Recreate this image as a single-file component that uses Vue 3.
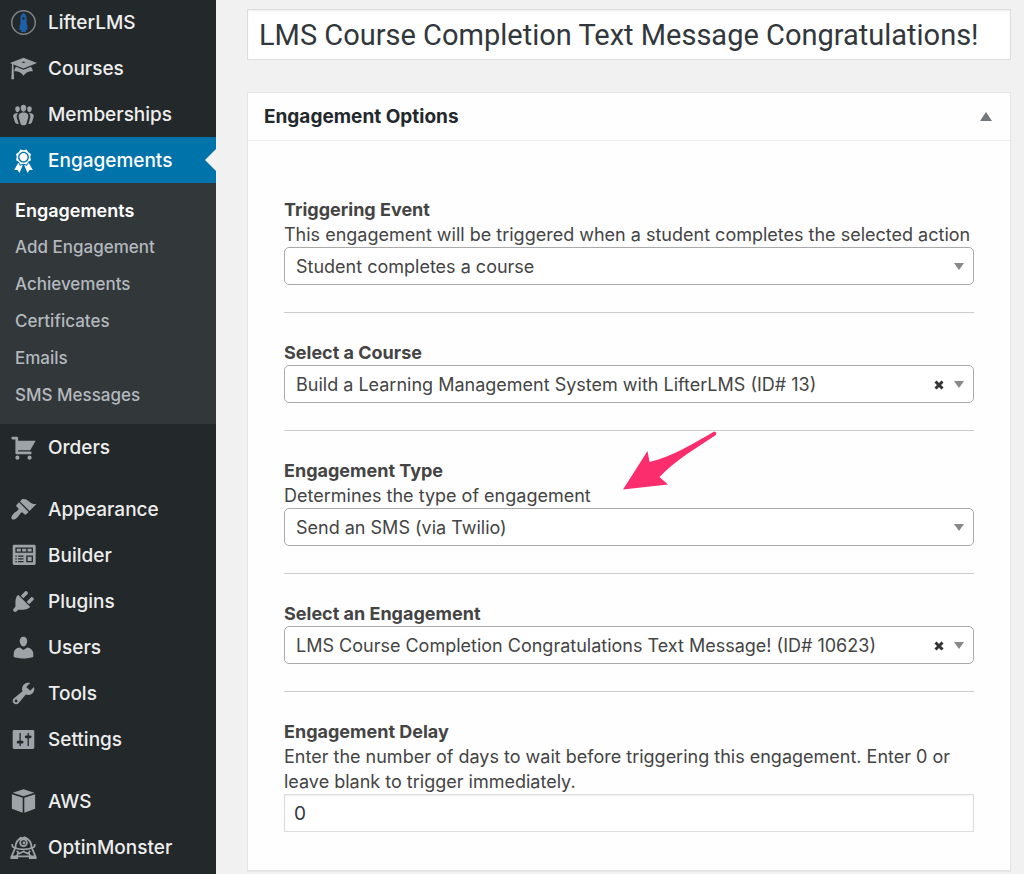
<script setup>
import { ref } from "vue";

const menu = [
  { id: "lifter", label: "LifterLMS" },
  {
    id: "courses",
    label: "Courses",
    path: "M10 10L2.54 7.02 3 18H1l.48-11.41L0 6l10-4 10 4zm0-5c-.55 0-1 .22-1 .5s.45.5 1 .5 1-.22 1-.5-.45-.5-1-.5zm0 6l5.57-2.23c.71.94 1.2 2.07 1.36 3.3-.3-.04-.61-.07-.93-.07-2.55 0-4.78 1.37-6 3.41C8.78 13.37 6.55 12 4 12c-.32 0-.63.03-.93.07.16-1.23.65-2.36 1.36-3.3z",
  },
  {
    id: "memberships",
    label: "Memberships",
    path: "M8.03 4.46c-.29 1.28.55 3.46 1.97 3.46 1.41 0 2.25-2.18 1.96-3.46-.22-.98-1.08-1.63-1.96-1.63-.89 0-1.74.65-1.97 1.63zM3.9 5.36c-.25 1.08.47 2.93 1.67 2.93s1.92-1.85 1.67-2.93c-.19-.83-.92-1.39-1.67-1.39s-1.48.56-1.67 1.39zm8.86 0c-.25 1.08.47 2.93 1.66 2.93 1.2 0 1.92-1.85 1.67-2.93-.19-.83-.92-1.39-1.67-1.39-.74 0-1.47.56-1.66 1.39zm-.59 11.43l1.25-4.3C14.2 10 12.71 8.47 10 8.47c-2.72 0-4.21 1.53-3.44 4.02l1.26 4.3C8.05 17.51 9 18 10 18c.98 0 1.94-.49 2.17-1.21zM6.1 9.1c-1.3 1.1-1.4 2.3-.9 3.9l1.2 4c-1.5 0-2.4-.5-2.7-1.3l-1.1-3.4C1.9 10 3.3 8.7 6.1 9.1zM13.9 9.1c1.3 1.1 1.4 2.3.9 3.9l-1.2 4c1.5 0 2.4-.5 2.7-1.3l1.1-3.4C18.1 10 16.7 8.7 13.9 9.1z",
  },
  {
    id: "engagements",
    label: "Engagements",
    path: "M4.46 5.16L5 7.46l-.54 2.29 2.01 1.24L7.7 13l2.3-.54 2.3.54 1.23-2.01 2.01-1.24L15 7.46l.54-2.3-2-1.24-1.24-2.01-2.3.55-2.29-.54-1.25 2zm5.55 6.34c-2.21 0-4-1.79-4-4s1.79-4 4-4 4 1.79 4 4-1.79 4-4 4zm-.02-1C8.33 10.5 7 9.16 7 7.5c0-1.65 1.33-3 2.99-3S13 5.85 13 7.5c0 1.66-1.35 3-3.01 3zm3.84 1.1l-1.28 2.24-2.08-.47L13 19.2l1.4-2.2h2.5zm-7.7.07l1.25 2.25 2.13-.51L7 19.2 5.6 17H3.1z",
    current: true,
    children: [
      "Engagements",
      "Add Engagement",
      "Achievements",
      "Certificates",
      "Emails",
      "SMS Messages",
    ],
  },
  {
    id: "orders",
    label: "Orders",
    path: "M6 13h9c.55 0 1 .45 1 1s-.45 1-1 1H5c-.55 0-1-.45-1-1V4H2c-.55 0-1-.45-1-1s.45-1 1-1h3c.55 0 1 .45 1 1v2h13l-4 7H6v1zm-.5 3c.83 0 1.5.67 1.5 1.5S6.33 19 5.5 19 4 18.33 4 17.5 4.67 16 5.5 16zm9 0c.83 0 1.5.67 1.5 1.5s-.67 1.5-1.5 1.5-1.5-.67-1.5-1.5.67-1.5 1.5-1.5z",
  },
  {
    id: "appearance",
    label: "Appearance",
    separated: true,
    path: "M14.48 11.06L7.41 3.99l1.5-1.5c.5-.56 2.3-.47 3.51.32 1.21.8 1.43 1.28 2.91 2.1 1.18.64 2.45 1.26 4.45.85zm-.71.71L6.7 4.7 4.93 6.47c-.39.39-.39 1.02 0 1.41l1.06 1.06c.39.39.39 1.03 0 1.42-.6.6-1.43 1.11-2.21 1.69-.35.26-.7.53-1.01.84C1.43 14.23.4 16.08 1.4 17.07c.99 1 2.84-.03 4.18-1.36.31-.31.58-.66.85-1.02.57-.78 1.08-1.61 1.69-2.21.39-.39 1.02-.39 1.41 0l1.06 1.06c.39.39 1.02.39 1.41 0z",
  },
  {
    id: "builder",
    label: "Builder",
    path: "M19 16V3c0-.55-.45-1-1-1H3c-.55 0-1 .45-1 1v13c0 .55.45 1 1 1h15c.55 0 1-.45 1-1zM4 4h13v4H4V4zm1 1v2h3V5H5zm4 0v2h3V5H9zm4 0v2h3V5h-3zM4 10h1v1H4zM6 10h4v1H6zM4 12h1v1H4zM6 12h4v1H6zM4 14h1v1H4zM6 14h4v1H6zM12 10h5v5h-5zm1 1v3h3v-3z",
  },
  {
    id: "plugins",
    label: "Plugins",
    path: "M13.11 4.36L9.87 7.6 8 5.73l3.24-3.24c.35-.34 1.05-.2 1.56.32.52.51.66 1.21.31 1.55zm-8 1.77l.91-1.12 9.01 9.01-1.19.84c-.71.71-2.63 1.16-3.82 1.16H6.14L4.9 17.26c-.59.59-1.54.59-2.12 0-.59-.58-.59-1.53 0-2.12l1.24-1.24v-3.88c0-1.13.4-3.19 1.09-3.89zm7.26 3.97l3.24-3.24c.34-.35 1.04-.21 1.55.31.52.51.66 1.21.31 1.55l-3.24 3.25z",
  },
  {
    id: "users",
    label: "Users",
    path: "M10 9.25c-2.27 0-2.73-3.44-2.73-3.44C7 4.02 7.82 2 9.97 2c2.16 0 2.98 2.02 2.71 3.81 0 0-.41 3.44-2.68 3.44zm0 2.57L12.72 10c2.39 0 4.52 2.33 4.52 4.53v2.49s-3.65 1.13-7.24 1.13c-3.65 0-7.24-1.13-7.24-1.13v-2.49c0-2.25 1.94-4.48 4.47-4.48z",
  },
  {
    id: "tools",
    label: "Tools",
    path: "M16.68 9.77c-1.34 1.34-3.3 1.67-4.95.99l-5.41 6.52c-.99.99-2.59.99-3.58 0s-.99-2.59 0-3.57l6.52-5.42c-.68-1.65-.35-3.61.99-4.95 1.28-1.28 3.12-1.62 4.72-1.06l-2.89 2.89 2.82 2.82 2.86-2.87c.53 1.58.18 3.39-1.08 4.65zM3.81 16.21c.4.39 1.04.39 1.43 0 .4-.4.4-1.04 0-1.43-.39-.4-1.03-.4-1.43 0-.39.39-.39 1.03 0 1.43z",
  },
  {
    id: "settings",
    label: "Settings",
    path: "M18 16V4c0-.55-.45-1-1-1H3c-.55 0-1 .45-1 1v12c0 .55.45 1 1 1h14c.55 0 1-.45 1-1zM8 11h1c.55 0 1 .45 1 1s-.45 1-1 1H8v1.5c0 .28-.22.5-.5.5s-.5-.22-.5-.5V13H6c-.55 0-1-.45-1-1s.45-1 1-1h1V5.5c0-.28.22-.5.5-.5s.5.22.5.5V11zm5-2h-1c-.55 0-1-.45-1-1s.45-1 1-1h1V5.5c0-.28.22-.5.5-.5s.5.22.5.5V7h1c.55 0 1 .45 1 1s-.45 1-1 1h-1v5.5c0 .28-.22.5-.5.5s-.5-.22-.5-.5V9z",
  },
  {
    id: "aws",
    label: "AWS",
    separated: true,
    path: "M10 1L18 3.6 10 6.2 2 3.6zM1.4 4.7L9.4 7.3V18.4L1.4 15.4zM18.6 4.7L10.6 7.3V18.4L18.6 15.4z",
  },
  { id: "optin", label: "OptinMonster" },
];

const title = ref("LMS Course Completion Text Message Congratulations!");
const delay = ref("0");

const fields = [
  {
    id: "trigger",
    label: "Triggering Event",
    desc: "This engagement will be triggered when a student completes the selected action",
    value: "Student completes a course",
  },
  {
    id: "course",
    label: "Select a Course",
    value: "Build a Learning Management System with LifterLMS (ID# 13)",
    clearable: true,
  },
  {
    id: "type",
    label: "Engagement Type",
    desc: "Determines the type of engagement",
    value: "Send an SMS (via Twilio)",
    pointer: true,
  },
  {
    id: "engagement",
    label: "Select an Engagement",
    value: "LMS Course Completion Congratulations Text Message! (ID# 10623)",
    clearable: true,
  },
];
</script>

<template>
  <div class="admin">
    <nav class="sidebar">
      <ul class="menu">
        <li v-for="item in menu" :key="item.id" :class="{ separated: item.separated }">
          <a href="#" :class="['menu-link', { current: item.current }]">
            <svg v-if="item.id === 'lifter'" class="icon" viewBox="0 0 20 20" aria-hidden="true">
              <circle cx="10" cy="10" r="8.7" fill="none" stroke="#7f8487" stroke-width="1.1" />
              <path
                fill="#1d5fa8"
                d="M10 3c1.7.8 2.3 2.2 2.3 4v4.2l.6.8v3.6h-1.200V17H8.300v-1.400H7.100V12l.6-.8V7c0-1.800.6-3.200 2.300-4z"
              />
              <circle cx="10" cy="7" r=".9" fill="#23282b" />
            </svg>
            <svg v-else-if="item.id === 'optin'" class="icon" viewBox="0 0 20 20" aria-hidden="true">
              <g fill="none" stroke="currentColor" stroke-width="1.3" stroke-linejoin="round">
                <path d="M4 11C4 5.5 6.5 3 10 3S16 5.5 16 11" />
                <circle cx="10" cy="6.5" r="2.5" />
                <path d="M3.5 10.2c3.5 1.6 9.5 1.6 13 0M5 12.5l2 2 3-1.5 3 1.5 2-2M4 16.5h12" />
                <path d="M3.8 10.5L1 17h4l1-3M16.2 10.5L19 17h-4l-1-3M1.5 7.5l.5 2 2 1M18.5 7.5l-.5 2-2 1" />
              </g>
              <path fill="currentColor" d="M5.5 5l2-3 2 .6 1-1 2 1L14.5 5l-2-.8h-5zM.8 16H6v2.5H.2zM14 16h5.2l.6 2.5H14z" />
              <circle cx="10.3" cy="6.6" r="1" fill="currentColor" />
            </svg>
            <svg v-else class="icon" viewBox="0 0 20 20" aria-hidden="true">
              <path fill="currentColor" fill-rule="evenodd" :d="item.path" />
            </svg>
            <span>{{ item.label }}</span>
          </a>
          <ul v-if="item.children" class="submenu">
            <li v-for="(child, i) in item.children" :key="child">
              <a href="#" :class="['submenu-link', { active: i === 0 }]">{{ child }}</a>
            </li>
          </ul>
        </li>
      </ul>
    </nav>

    <main class="content">
      <input v-model="title" class="title-input" type="text" aria-label="Title" />

      <section class="panel">
        <header class="panel-header">
          <h2>Engagement Options</h2>
          <button class="toggle" type="button" aria-label="Toggle panel">
            <svg viewBox="0 0 12 9" aria-hidden="true"><path d="M6 0l6 9H0z" /></svg>
          </button>
        </header>

        <form class="panel-body" @submit.prevent>
          <div v-for="field in fields" :key="field.id" class="field">
            <label :for="field.id">{{ field.label }}</label>
            <p v-if="field.desc">{{ field.desc }}</p>
            <div class="select-wrap">
              <select :id="field.id">
                <option>{{ field.value }}</option>
              </select>
              <button v-if="field.clearable" class="clear" type="button" aria-label="Clear">
                <svg viewBox="0 0 10 10" aria-hidden="true"><path d="M1.5 1.5l7 7M8.5 1.5l-7 7" /></svg>
              </button>
              <svg class="caret" viewBox="0 0 10 7" aria-hidden="true"><path d="M0 0h10L5 7z" /></svg>
            </div>
            <svg v-if="field.pointer" class="pointer" viewBox="0 0 100 64" aria-hidden="true">
              <path
                d="M3 60.5L27.5 22l2 11C54 27 72 15 93 3.2c2.5-1.2 4.5 1 2.5 3C78 18 54 32 39.5 48l8.5 7.5z"
              />
            </svg>
          </div>

          <div class="field">
            <label for="delay">Engagement Delay</label>
            <p>
              Enter the number of days to wait before triggering this engagement. Enter 0 or leave
              blank to trigger immediately.
            </p>
            <input id="delay" v-model="delay" class="text-input" type="text" />
          </div>
        </form>
      </section>
    </main>
  </div>
</template>

<style>
body {
  background-color: #f1f1f1;
  overflow: hidden;
}
</style>

<style scoped>
.admin {
  display: flex;
  min-height: 100vh;
  font-family: Inter, "Liberation Sans", sans-serif;
  font-size: 18px;
  color: #444;
}
.admin * {
  box-sizing: border-box;
}

ul {
  list-style: none;
  margin: 0;
  padding: 0;
}
button {
  padding: 0;
  border: 0;
  background: none;
}

.sidebar {
  flex: 0 0 216px;
  background-color: #23282b;
}
.menu {
  margin-top: -1px;
}
.separated {
  margin-top: 16px;
}
.menu-link {
  position: relative;
  display: flex;
  align-items: center;
  gap: 11px;
  height: 46px;
  padding-left: 10px;
  font-size: 19px;
  font-weight: 500;
  color: #eee;
  text-decoration: none;
}
.icon {
  flex: none;
  width: 27px;
  height: 27px;
  color: #9ea3a8;
}
.menu-link.current {
  background-color: #0073aa;
  color: #fff;

  .icon {
    color: #fff;
  }
}
.menu-link.current::after {
  content: "";
  position: absolute;
  right: 0;
  border: 11px solid transparent;
  border-left: 0;
  border-right-color: #f1f1f1;
}
.submenu {
  padding: 9px 0 10px;
  background-color: #32373a;
}
.submenu-link {
  display: block;
  padding-left: 15px;
  font-size: 17px;
  font-weight: 500;
  line-height: 37px;
  color: #b4b9be;
  text-decoration: none;
}
.submenu-link.active {
  font-size: 18px;
  font-weight: 600;
  color: #fff;
}

.content {
  flex: 1;
  min-width: 0;
  padding: 9px 13px 0 31px;
}
.title-input {
  display: block;
  width: 100%;
  height: 51px;
  padding: 0 11px;
  border: 1px solid #ddd;
  background-color: #fff;
  box-shadow: inset 0 1px 2px rgba(0, 0, 0, 0.07);
  font-family: Roboto, "Liberation Sans", sans-serif;
  font-size: 29px;
  color: #32373c;
}

.panel {
  margin-top: 32px;
  border: 1px solid #e5e5e5;
  background-color: #fefefe;
  box-shadow: 0 1px 1px rgba(0, 0, 0, 0.04);
}
.panel-header {
  display: flex;
  align-items: center;
  justify-content: space-between;
  height: 48px;
  padding: 0 18px 0 16px;
  border-bottom: 1px solid #eee;

  h2 {
    margin: 0;
    font-size: 19px;
    font-weight: 700;
    color: #23282d;
  }
}
.toggle svg {
  display: block;
  width: 12px;
  height: 9px;
  fill: #72777c;
}

.panel-body {
  padding: 56px 36px 38px;
}
.field {
  position: relative;
  line-height: 25px;

  label {
    display: block;
    font-weight: 700;
  }
  p {
    margin: 0;
  }
}
.field + .field {
  margin-top: 27px;
  padding-top: 27px;
  border-top: 1px solid #ccc;
}

.select-wrap {
  position: relative;

  select {
    display: block;
    width: 100%;
    height: 38px;
    padding: 0 60px 0 11px;
    border: 1px solid #aaa;
    border-radius: 5px;
    background-color: #fff;
    appearance: none;
    font: inherit;
    color: #444;
  }
}
.caret {
  position: absolute;
  top: 16px;
  right: 10px;
  width: 10px;
  height: 7px;
  fill: #888;
  pointer-events: none;
}
.clear {
  position: absolute;
  top: 15px;
  right: 30px;

  svg {
    display: block;
    width: 10px;
    height: 10px;
    fill: none;
    stroke: #333;
    stroke-width: 3;
  }
}
.pointer {
  position: absolute;
  top: -2px;
  left: 336px;
  width: 100px;
  height: 64px;
  fill: #fb2d6c;
}
.text-input {
  display: block;
  width: 100%;
  height: 38px;
  padding: 0 9px;
  border: 1px solid #ddd;
  background-color: #fff;
  box-shadow: inset 0 1px 2px rgba(0, 0, 0, 0.07);
  font-family: inherit;
  font-size: 19px;
  color: #32373c;
}
</style>
